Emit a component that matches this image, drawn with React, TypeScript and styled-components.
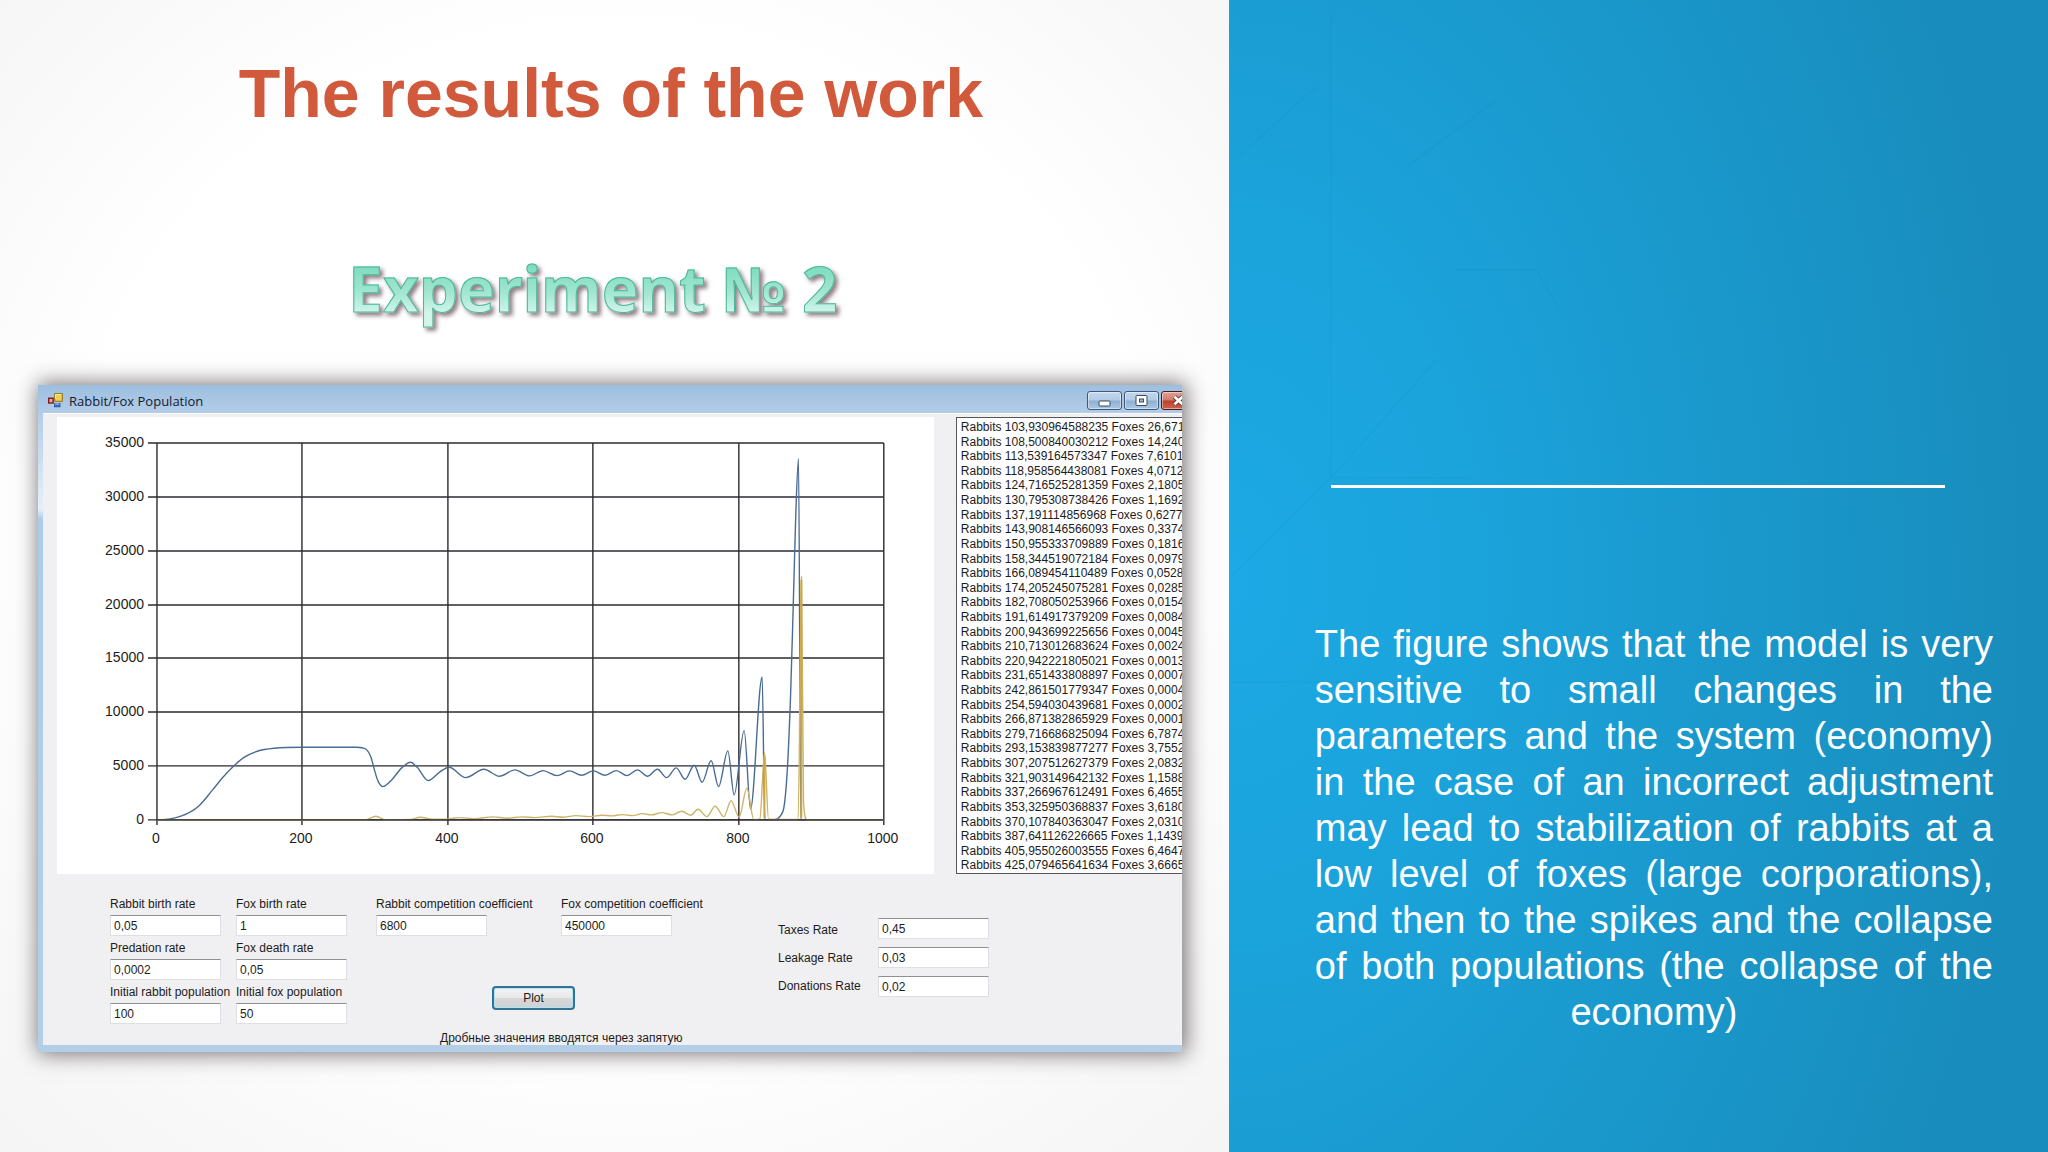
import React from "react";
import styled, { createGlobalStyle } from "styled-components";

const GlobalStyle = createGlobalStyle`
  *, *::before, *::after { box-sizing: border-box; }
  body {
    margin: 0;
    font-family: "Liberation Sans", Arial, sans-serif;
    color: #1c1c1c;
  }
`;

const Slide = styled.main`
  display: grid;
  grid-template-columns: 3fr 2fr;
  min-height: 100vh;
`;

const ResultsPanel = styled.section`
  display: flex;
  flex-direction: column;
  min-width: 0;
  padding: 54px 47px 40px 38px;
  background: radial-gradient(ellipse 62% 62% at 50% 46%, #ffffff 0%, #ffffff 70%, #f8f8f8 100%, #f1f1f1 140%);
`;

const Title = styled.h1`
  margin: 0;
  padding-left: 2px;
  font-size: 68px;
  line-height: 78px;
  text-align: center;
  color: #d15a3d;
`;

const Subtitle = styled.h2`
  margin: 114px 0 55px;
  padding-right: 34px;
  font-family: "Noto Sans", "Open Sans", sans-serif;
  font-size: 62px;
  line-height: 84px;
  font-weight: 700;
  text-align: center;
`;

const SubtitleFill = styled.span`
  color: transparent;
  background: linear-gradient(#7fdcbf 25%, #a0e6d0 55%, #d2f5ea 80%);
  background-clip: text;
  -webkit-background-clip: text;
  -webkit-text-stroke: 1px #4cb899;
  filter: drop-shadow(3px 3px 2px rgba(70, 40, 50, 0.6));
`;

const AppWindow = styled.article`
  overflow: hidden;
  padding: 0 0 7px 5px;
  background:
    linear-gradient(#9dbfdf 0, #b3cde8 28px, #e4f0fa 124px, #a9cdea 134px, #b3cfe8 100%);
  box-shadow: 2px 0 20px 2px rgba(40, 30, 35, 0.62);
`;

const TitleBar = styled.header`
  display: flex;
  align-items: center;
  gap: 6px;
  height: 28px;
  padding: 3px 0 0 5px;
  overflow: hidden;
`;

const WindowTitle = styled.span`
  flex: 1;
  font-family: "Open Sans", "Noto Sans", sans-serif;
  font-size: 13px;
  line-height: 16px;
  color: #14202e;
`;

const WindowButtons = styled.div`
  display: flex;
  gap: 2px;
  margin-right: -14px;
`;

const WindowButton = styled.button<{ $danger?: boolean }>`
  display: grid;
  place-items: center;
  width: 35px;
  height: 19px;
  padding: 0;
  border: 1px solid ${(p) => (p.$danger ? "#4a1a20" : "#3f587a")};
  border-radius: 3px;
  box-shadow: inset 0 0 0 1px rgba(255, 255, 255, 0.45);
  background: ${(p) =>
    p.$danger
      ? "linear-gradient(#e0a091 0%, #d07c6a 48%, #b8402c 52%, #d0644a 100%)"
      : "linear-gradient(#c4d8ee 0%, #b2cae4 48%, #8fafd0 52%, #a9c8e4 100%)"};
`;

const Client = styled.div`
  background: #f0eff1;
  border-top: 1px solid #fafbfd;
`;

const Results = styled.div`
  display: flex;
  gap: 22px;
  padding: 3px 0 0 14px;
`;

const ChartPane = styled.figure`
  flex: 1;
  min-width: 0;
  margin: 0;
  background: #ffffff;
`;

const ChartSvg = styled.svg`
  display: block;
  width: 100%;
  height: auto;
`;

const AxisText = styled.text`
  font-family: "Liberation Sans", Arial, sans-serif;
  font-size: 14px;
  fill: #1c1c1c;
`;

const LogList = styled.ol`
  display: grid;
  grid-auto-rows: 1fr;
  flex: none;
  width: 226px;
  height: 457px;
  margin: 0;
  padding: 2px 0 0 4px;
  list-style: none;
  overflow: hidden;
  background: #fefefe;
  border: 1px solid #55555a;
  border-right: 0;
`;

const LogRow = styled.li`
  font-size: 12px;
  line-height: 14px;
  white-space: nowrap;
`;

const Form = styled.form`
  display: flex;
  align-items: flex-start;
  padding: 23px 0 0 67px;
`;

const PopulationFields = styled.div`
  display: grid;
  grid-template-columns: 111px 111px;
  gap: 5px 15px;
`;

const Centre = styled.div`
  display: flex;
  flex-direction: column;
  width: 402px;
  margin-left: 29px;
`;

const CompetitionFields = styled.div`
  display: grid;
  grid-template-columns: 170px 170px;
  gap: 15px;
`;

const Field = styled.div`
  display: flex;
  flex-direction: column;
  gap: 4px;
`;

const Label = styled.label`
  font-size: 12px;
  line-height: 14px;
  white-space: nowrap;
`;

const TextBox = styled.input`
  width: 111px;
  height: 21px;
  padding: 0 3px;
  border: 1px solid #dedfe4;
  border-top-color: #8e8f92;
  font-family: inherit;
  font-size: 12px;
  color: #1c1c1c;
  background: #ffffff;
`;

const PlotButton = styled.button`
  width: 83px;
  height: 24px;
  margin: 50px 0 21px 116px;
  padding: 0;
  border: 2px solid #2f7397;
  border-radius: 4px;
  font-family: inherit;
  font-size: 12px;
  color: #1c1c1c;
  background: linear-gradient(#f3f3f4 0%, #e9e9ea 48%, #d6d7d9 52%, #cfd1d3 100%);
  box-shadow: inset 0 0 0 1px #b5e3f3;
`;

const Note = styled.p`
  margin: 0 0 0 64px;
  font-size: 12px;
  line-height: 14px;
  white-space: nowrap;
`;

const Rates = styled.div`
  display: grid;
  grid-template-columns: 100px 111px;
  padding-top: 21px;
`;

const RateLabels = styled.div`
  display: flex;
  flex-direction: column;
  gap: 14px;
  padding-top: 5px;
`;

const RateInputs = styled.div`
  display: flex;
  flex-direction: column;
  gap: 8px;
`;

const CommentPanel = styled.aside`
  position: relative;
  padding: 485px 55px 40px 86px;
  background: radial-gradient(ellipse 100% 105% at 0% 50%, #1ca9e5 0%, #1ba3db 30%, #1a98cc 62%, #188cbc 100%);
`;

const Facets = styled.svg`
  position: absolute;
  inset: 0;
  width: 100%;
  height: 100%;
`;

const Divider = styled.hr`
  position: relative;
  height: 3px;
  margin: 0 48px 133px 16px;
  border: 0;
  background: #ffffff;
`;

const Comment = styled.p`
  position: relative;
  margin: 0;
  font-size: 38px;
  line-height: 46px;
  text-align: justify;
  text-align-last: center;
  color: #ffffff;
`;

type Point = [number, number];

const rabbits: Point[] = [
  [157, 820], [181.6, 816], [198.9, 806], [212.6, 790], [223, 777.3], [233.3, 766.7], [243.6, 757.7],
  [257.4, 751.3], [274.6, 748.3], [302, 747.3], [357, 747.3], [366, 749.3], [371, 757.3], [374.5, 770],
  [378, 781], [383, 786.7], [391.7, 780], [402, 767.7], [410.6, 762.3], [417.5, 767.7], [428.2, 780.7],
  [440, 772], [449.2, 767.3], [465.8, 777.7], [484, 769.3], [499.5, 776.3], [515, 770], [529.5, 776],
  [543.2, 770.7], [557, 775.7], [569.7, 771], [581.8, 775.3], [593.5, 771], [605.2, 775.3], [616.6, 770.7],
  [627, 775.7], [637.6, 770], [647.6, 776.3], [657.6, 769.3], [666.7, 777.7], [676.3, 768], [685.3, 779.3],
  [694.3, 765.3], [702.3, 782.3], [711.3, 760.7], [718.7, 786.7], [728, 751], [734.3, 795], [744.3, 730.7],
  [750.7, 809], [762.3, 677], [765, 820], [771.7, 820], [783, 811.7], [787.3, 773], [790.7, 696.7],
  [793.3, 610], [796, 513.3], [798.7, 458.7], [801, 820], [884, 820],
];

const foxes: Point[] = [
  [157, 820], [365, 820], [376, 816.3], [385, 819.7], [410.6, 819.5], [420.3, 817.3], [433, 819.3],
  [448.5, 819], [459, 817.7], [474.4, 818.7], [493.3, 817], [507, 818.3], [522.6, 817], [534.6, 817.7],
  [552, 816.3], [564, 817.3], [576, 815.7], [589.7, 816.7], [601.8, 815.3], [612, 816], [622.4, 814.7],
  [632.8, 815.7], [642.4, 813.7], [651.7, 815], [662, 812.7], [672.3, 815], [681.7, 811.3], [690.7, 815.3],
  [698.3, 809.3], [707, 816.7], [715.3, 806.3], [724, 816.7], [731.3, 800.7], [739.3, 817.3], [747, 788.3],
  [754, 819.7], [760, 819], [764.7, 752.7], [768.7, 819.3], [798.3, 819.5], [801.7, 576.7], [803.7, 803],
  [807.3, 820], [884, 820],
];

// Monotone cubic interpolation: the curve turns only at the listed points.
function curve(points: Point[]): string {
  const slope = points.slice(1).map((p, i) => (p[1] - points[i][1]) / (p[0] - points[i][0]));
  const tangent = points.map((_, i) => {
    const a = slope[i - 1] ?? 0;
    const b = slope[i] ?? 0;
    if (a * b <= 0) return 0;
    return Math.sign(a) * Math.min(Math.abs(a + b) / 2, 3 * Math.abs(a), 3 * Math.abs(b));
  });
  let d = `M${points[0][0]},${points[0][1]}`;
  for (let i = 1; i < points.length; i++) {
    const [x0, y0] = points[i - 1];
    const [x1, y1] = points[i];
    const h = (x1 - x0) / 3;
    d += `C${x0 + h},${y0 + h * tangent[i - 1]} ${x1 - h},${y1 - h * tangent[i]} ${x1},${y1}`;
  }
  return d;
}

const plot = { left: 157, right: 884, top: 443, bottom: 820 };
const yTicks = [0, 5000, 10000, 15000, 20000, 25000, 30000, 35000];
const xTicks = [0, 200, 400, 600, 800, 1000];
const toX = (v: number) => Math.round(plot.left + (v / 1000) * (plot.right - plot.left));
const toY = (v: number) => Math.round(plot.bottom - (v / 35000) * (plot.bottom - plot.top));

function PopulationChart() {
  return (
    <ChartSvg viewBox="57 417 877 455" role="img" aria-label="Rabbit and fox populations over time">
      <g stroke="#2b2b30" strokeWidth="1.4">
        {yTicks.map((v) => (
          <line key={v} x1={plot.left - 9} x2={plot.right} y1={toY(v)} y2={toY(v)} />
        ))}
        {xTicks.map((v) => (
          <line key={v} x1={toX(v)} x2={toX(v)} y1={plot.top} y2={plot.bottom + 5} />
        ))}
      </g>
      <path d={curve(rabbits)} fill="none" stroke="#4a6c92" strokeWidth="1.4" />
      <path d={curve(foxes)} fill="none" stroke="#cdb469" strokeWidth="1.4" />
      <path d="M801.5 580V818M764.6 756V818" fill="none" stroke="#d0a544" strokeWidth="2" />
      <line x1={plot.left} x2={plot.right} y1={plot.bottom} y2={plot.bottom} stroke="#2b2b30" strokeWidth="1.4" />
      {yTicks.map((v) => (
        <AxisText key={v} x={plot.left - 13} y={toY(v) + 4} textAnchor="end">{v}</AxisText>
      ))}
      {xTicks.map((v) => (
        <AxisText key={v} x={toX(v) - 1} y={plot.bottom + 23} textAnchor="middle">{v}</AxisText>
      ))}
    </ChartSvg>
  );
}

const log: [string, string][] = [
  ["103,930964588235", "26,671"], ["108,500840030212", "14,240"], ["113,539164573347", "7,6101"],
  ["118,958564438081", "4,0712"], ["124,716525281359", "2,1805"], ["130,795308738426", "1,1692"],
  ["137,191114856968", "0,6277"], ["143,908146566093", "0,3374"], ["150,955333709889", "0,1816"],
  ["158,344519072184", "0,0979"], ["166,089454110489", "0,0528"], ["174,205245075281", "0,0285"],
  ["182,708050253966", "0,0154"], ["191,614917379209", "0,0084"], ["200,943699225656", "0,0045"],
  ["210,713012683624", "0,0024"], ["220,942221805021", "0,0013"], ["231,651433808897", "0,0007"],
  ["242,861501779347", "0,0004"], ["254,594030439681", "0,0002"], ["266,871382865929", "0,0001"],
  ["279,716686825094", "6,7874"], ["293,153839877277", "3,7552"], ["307,207512627379", "2,0832"],
  ["321,903149642132", "1,1588"], ["337,266967612491", "6,4655"], ["353,325950368837", "3,6180"],
  ["370,107840363047", "2,0310"], ["387,641126226665", "1,1439"], ["405,955026003555", "6,4647"],
  ["425,079465641634", "3,6665"],
];

interface FieldData {
  id: string;
  label: string;
  value: string;
}

const populationFields: FieldData[] = [
  { id: "rabbit-birth", label: "Rabbit birth rate", value: "0,05" },
  { id: "fox-birth", label: "Fox birth rate", value: "1" },
  { id: "predation", label: "Predation rate", value: "0,0002" },
  { id: "fox-death", label: "Fox death rate", value: "0,05" },
  { id: "initial-rabbits", label: "Initial rabbit population", value: "100" },
  { id: "initial-foxes", label: "Initial fox population", value: "50" },
];

const competitionFields: FieldData[] = [
  { id: "rabbit-competition", label: "Rabbit competition coefficient", value: "6800" },
  { id: "fox-competition", label: "Fox competition coefficient", value: "450000" },
];

const rateFields: FieldData[] = [
  { id: "taxes", label: "Taxes Rate", value: "0,45" },
  { id: "leakage", label: "Leakage Rate", value: "0,03" },
  { id: "donations", label: "Donations Rate", value: "0,02" },
];

function LabelledField({ id, label, value }: FieldData) {
  return (
    <Field>
      <Label htmlFor={id}>{label}</Label>
      <TextBox id={id} defaultValue={value} />
    </Field>
  );
}

function AppIcon() {
  return (
    <svg width="15" height="15" viewBox="0 0 15 15" aria-hidden="true">
      <rect x="6.7" y="0.7" width="7.6" height="7.6" fill="#f3cf4c" stroke="#8a6a1c" strokeWidth="1" />
      <path d="M7.5 5.5v-4h5.8" fill="none" stroke="#fbeea0" />
      <rect x="0.7" y="5.2" width="4.4" height="4.8" fill="#e8a79c" stroke="#7c1f1a" strokeWidth="1.4" />
      <rect x="6.5" y="10.5" width="5.5" height="3.3" fill="#3c6cc0" stroke="#24489a" strokeWidth="0.8" />
      <path d="M6.8 11h4.6" stroke="#b9d2f6" strokeWidth="1" />
    </svg>
  );
}

function App() {
  return (
    <>
      <GlobalStyle />
      <Slide>
        <ResultsPanel>
          <Title>The results of the work</Title>
          <Subtitle>
            <SubtitleFill>Experiment № 2</SubtitleFill>
          </Subtitle>
          <AppWindow>
            <TitleBar>
              <AppIcon />
              <WindowTitle>Rabbit/Fox Population</WindowTitle>
              <WindowButtons>
                <WindowButton type="button" aria-label="Minimize">
                  <svg width="13" height="13" viewBox="0 0 13 13" aria-hidden="true">
                    <rect x="1" y="7" width="11" height="5" rx="1" fill="#fff" stroke="#3b4a5e" />
                  </svg>
                </WindowButton>
                <WindowButton type="button" aria-label="Maximize">
                  <svg width="13" height="13" viewBox="0 0 13 13" aria-hidden="true">
                    <rect x="1" y="1.5" width="11" height="10" rx="1" fill="#fff" stroke="#3b4a5e" />
                    <rect x="4.5" y="5" width="4" height="3" fill="#9db9d6" stroke="#3b4a5e" />
                  </svg>
                </WindowButton>
                <WindowButton type="button" aria-label="Close" $danger>
                  <svg width="13" height="13" viewBox="0 0 13 13" aria-hidden="true">
                    <path d="M2.5 2.8l8 7.4M10.5 2.8l-8 7.4" stroke="#5a2a2c" strokeWidth="4.4" />
                    <path d="M2.5 2.8l8 7.4M10.5 2.8l-8 7.4" stroke="#fff" strokeWidth="2.8" />
                  </svg>
                </WindowButton>
              </WindowButtons>
            </TitleBar>
            <Client>
              <Results>
                <ChartPane>
                  <PopulationChart />
                </ChartPane>
                <LogList>
                  {log.map(([r, f]) => (
                    <LogRow key={r}>{`Rabbits ${r} Foxes ${f}`}</LogRow>
                  ))}
                </LogList>
              </Results>
              <Form onSubmit={(e) => e.preventDefault()}>
                <PopulationFields>
                  {populationFields.map((f) => <LabelledField key={f.id} {...f} />)}
                </PopulationFields>
                <Centre>
                  <CompetitionFields>
                    {competitionFields.map((f) => <LabelledField key={f.id} {...f} />)}
                  </CompetitionFields>
                  <PlotButton type="submit">Plot</PlotButton>
                  <Note>Дробные значения вводятся через запятую</Note>
                </Centre>
                <Rates>
                  <RateLabels>
                    {rateFields.map((f) => <Label key={f.id} htmlFor={f.id}>{f.label}</Label>)}
                  </RateLabels>
                  <RateInputs>
                    {rateFields.map((f) => <TextBox key={f.id} id={f.id} defaultValue={f.value} />)}
                  </RateInputs>
                </Rates>
              </Form>
            </Client>
          </AppWindow>
        </ResultsPanel>
        <CommentPanel>
          <Facets viewBox="0 0 819 1152" preserveAspectRatio="none" aria-hidden="true">
            <g fill="none" stroke="#0c7fb4" strokeOpacity="0.14">
              <path d="M102 12V478H240" />
              <path d="M3 575L102 478L207 360" />
              <path d="M8 158L88 86M180 165L270 98" />
              <path d="M3 682H210" />
              <path d="M228 270H308L330 310" />
            </g>
          </Facets>
          <Divider />
          <Comment>
            The figure shows that the model is very sensitive to small changes in the parameters and
            the system (economy) in the case of an incorrect adjustment may lead to stabilization of
            rabbits at a low level of foxes (large corporations), and then to the spikes and the
            collapse of both populations (the collapse of the economy)
          </Comment>
        </CommentPanel>
      </Slide>
    </>
  );
}

export default App;
